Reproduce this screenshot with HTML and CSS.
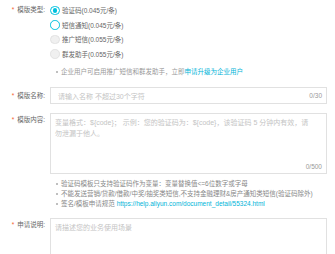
FILE: index.html
```html
<!DOCTYPE html>
<html lang="zh-CN">
<head>
<meta charset="utf-8">
<title>模版申请</title>
<link rel="stylesheet" href="styles.css">
</head>
<body>
<div class="form">
  <div class="row row-type">
    <div class="lbl"><span class="req">*</span>模版类型:</div>
    <div class="ctl">
      <div class="radio-row"><span class="radio checked"></span><span class="rtext">验证码(0.045元/条)</span></div>
      <div class="radio-row"><span class="radio hover"></span><span class="rtext">短信通知(0.045元/条)</span></div>
      <div class="radio-row"><span class="radio disabled"></span><span class="rtext">推广短信(0.055元/条)</span></div>
      <div class="radio-row"><span class="radio disabled"></span><span class="rtext">群发助手(0.055元/条)</span></div>
      <ul class="tips tips-note">
        <li>企业用户可启用推广短信和群发助手，立即<a class="link">申请升级为企业用户</a></li>
      </ul>
    </div>
  </div>

  <div class="row row-name">
    <div class="lbl lbl-input"><span class="req">*</span>模版名称:</div>
    <div class="ctl">
      <div class="box input-box">
        <span class="ph">请输入名称 不超过30个字符</span>
        <span class="count">0/30</span>
      </div>
    </div>
  </div>

  <div class="row row-content">
    <div class="lbl"><span class="req">*</span>模版内容:</div>
    <div class="ctl">
      <div class="box area-box">
        <span class="ph ph-area ph-wide">变量格式：${code}； 示例：您的验证码为：${code}，该验证码 5 分钟内有效，请<br>勿泄漏于他人。</span>
        <span class="count count-area">0/500</span>
      </div>
      <ul class="tips tips-list">
        <li>验证码模板只支持验证码作为变量：变量替换值&lt;=6位数字或字母</li>
        <li>不能发送营销/贷款/借款/中奖/抽奖类短信,不支持金融理财&amp;房产通知类短信(验证码除外)</li>
        <li>签名/模板申请规范 <a class="link">https://help.aliyun.com/document_detail/55324.html</a></li>
      </ul>
    </div>
  </div>

  <div class="row row-desc">
    <div class="lbl"><span class="req">*</span>申请说明:</div>
    <div class="ctl">
      <div class="box desc-box">
        <span class="ph ph-area">请描述您的业务使用场景</span>
      </div>
    </div>
  </div>
</div>
</body>
</html>
```

FILE: styles.css
```css
html, body {
  margin: 0;
  padding: 0;
  background: #fff;
}

body {
  font-family: "Liberation Sans", "Noto Sans CJK SC", sans-serif;
  font-size: 6.5px;
  color: #666;
  width: 335px;
  height: 254px;
  overflow: hidden;
}

.form {
  display: flex;
  flex-direction: column;
  padding-top: 3px;
}

.row {
  display: grid;
  grid-template-columns: 50px 277px;
}

.row-name { margin-top: 10px; }
.row-content { margin-top: 9px; }
.row-desc { margin-top: 9px; }

.lbl {
  text-align: right;
  padding-right: 5px;
  line-height: 14.5px;
  color: #666;
  white-space: nowrap;
}

.lbl-input { line-height: 17px; }
.row-content .lbl, .row-desc .lbl { line-height: 14px; }

.req {
  color: #f5602d;
  margin-right: 3px;
}

.radio-row {
  display: flex;
  align-items: center;
  height: 14.5px;
}

.radio {
  box-sizing: border-box;
  width: 9.5px;
  height: 9.5px;
  border-radius: 50%;
  border: 1px solid #ddd;
  background: #fff;
  margin-right: 2.5px;
  display: flex;
  align-items: center;
  justify-content: center;
  flex: none;
}

.radio.checked { border-color: #00c1de; }
.radio.checked::after {
  content: "";
  width: 4.5px;
  height: 4.5px;
  border-radius: 50%;
  background: #00c1de;
}
.radio.hover { border-color: #00c1de; }
.radio.disabled {
  background: #f0f0f0;
  border-color: #e2e2e2;
}

.rtext { color: #666; }

.tips {
  list-style: none;
  margin: 0;
  padding: 0 0 0 6px;
  color: #999;
}

.tips li {
  position: relative;
  line-height: 10px;
  white-space: nowrap;
  padding-left: 5px;
}

.tips li::before {
  content: "";
  position: absolute;
  left: 0;
  top: 4px;
  width: 2px;
  height: 2px;
  border-radius: 50%;
  background: #aaa;
}

.tips-note { margin-top: 6px; }
.tips-list { margin-top: 5px; color: #888; }

.link {
  color: #00b4d8;
  text-decoration: none;
}

.box {
  box-sizing: border-box;
  border: 1px solid #e1e1e1;
  background: #fff;
  display: flex;
}

.input-box {
  height: 17px;
  align-items: center;
  padding: 0 4px 0 7px;
  justify-content: space-between;
}

.ph {
  color: #c4c4c4;
  font-size: 7px;
}

.count {
  color: #999;
  font-size: 6.5px;
}

.area-box {
  height: 61px;
  flex-direction: column;
  padding: 3px 3px 2px 4px;
}

.ph-area {
  line-height: 11px;
}

.ph-wide {
  white-space: nowrap;
}

.count-area {
  margin-top: auto;
  align-self: flex-end;
  line-height: 8px;
  margin-right: 1px;
}

.desc-box {
  height: 60px;
  flex-direction: column;
  padding: 3px 4px 2px 4px;
}
```
